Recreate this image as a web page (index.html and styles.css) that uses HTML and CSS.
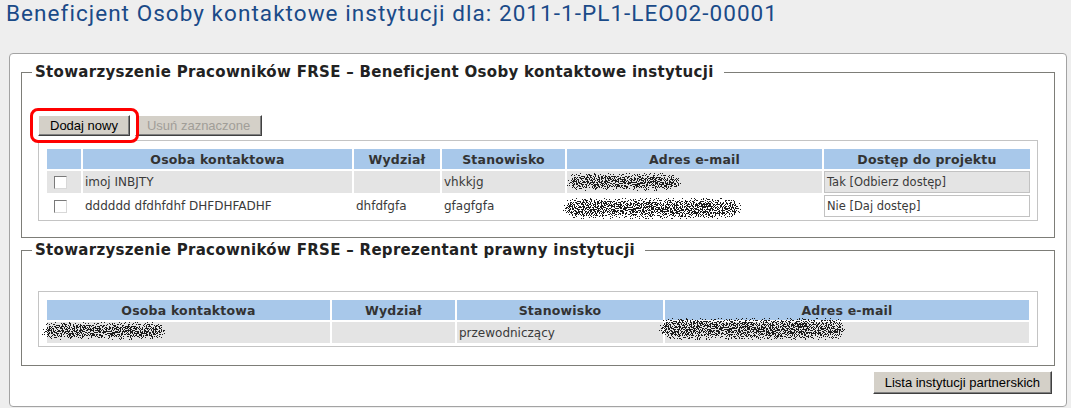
FILE: index.html
```html
<!DOCTYPE html>
<html lang="pl">
<head>
<meta charset="utf-8">
<title>Beneficjent Osoby kontaktowe</title>
<link rel="stylesheet" href="styles.css">
</head>
<body>
<svg class="defs" width="0" height="0" aria-hidden="true">
  <defs>
    <filter id="dither" x="-20%" y="-40%" width="140%" height="180%" color-interpolation-filters="sRGB">
      <feGaussianBlur in="SourceAlpha" stdDeviation="3" result="blur"/>
      <feTurbulence type="fractalNoise" baseFrequency="0.9" numOctaves="2" seed="7" result="noise"/>
      <feColorMatrix in="noise" type="matrix" values="0 0 0 0 0  0 0 0 0 0  0 0 0 0 0  2.4 0 0 0 -0.7" result="na"/>
      <feComposite in="na" in2="blur" operator="arithmetic" k1="0" k2="1" k3="1" k4="-0.97" result="mix"/>
      <feComponentTransfer in="mix" result="th"><feFuncA type="discrete" tableValues="0 1"/></feComponentTransfer>
      <feFlood flood-color="#1c1c1c"/>
      <feComposite in2="th" operator="in"/>
    </filter>
  </defs>
</svg>

<h1 class="title">Beneficjent Osoby kontaktowe instytucji dla: 2011-1-PL1-LEO02-00001</h1>

<div class="panel">
  <fieldset class="group group-contacts">
    <legend>Stowarzyszenie Pracowników FRSE – Beneficjent Osoby kontaktowe instytucji</legend>
    <div class="toolbar">
      <span class="mark-wrap"><button class="btn" type="button">Dodaj nowy</button><span class="mark"></span></span>
      <button class="btn" type="button" disabled>Usuń zaznaczone</button>
    </div>
    <div class="grid-box">
      <table class="grid grid-contacts">
        <colgroup>
          <col class="c-cb"><col class="c-name1"><col class="c-dept1"><col class="c-pos1"><col class="c-mail1"><col class="c-acc">
        </colgroup>
        <thead>
          <tr><th></th><th>Osoba kontaktowa</th><th>Wydział</th><th>Stanowisko</th><th>Adres e-mail</th><th>Dostęp do projektu</th></tr>
        </thead>
        <tbody>
          <tr class="odd">
            <td class="cb"><span class="check"></span></td>
            <td>imoj INBJTY</td>
            <td></td>
            <td>vhkkjg</td>
            <td class="mail"><svg class="smudge smudge-1" viewBox="0 0 124 24"><rect x="4" y="3" width="116" height="18" rx="9" filter="url(#dither)"/></svg></td>
            <td class="access">Tak [Odbierz dostęp]</td>
          </tr>
          <tr class="even">
            <td class="cb"><span class="check"></span></td>
            <td>dddddd dfdhfdhf DHFDHFADHF</td>
            <td>dhfdfgfa</td>
            <td>gfagfgfa</td>
            <td class="mail"><svg class="smudge smudge-2" viewBox="0 0 188 27"><rect x="4" y="3" width="180" height="21" rx="10" filter="url(#dither)"/></svg></td>
            <td class="access">Nie [Daj dostęp]</td>
          </tr>
        </tbody>
      </table>
    </div>
  </fieldset>

  <fieldset class="group group-legal">
    <legend>Stowarzyszenie Pracowników FRSE – Reprezentant prawny instytucji</legend>
    <div class="grid-box">
      <table class="grid grid-legal">
        <colgroup>
          <col class="c-name2"><col class="c-dept2"><col class="c-pos2"><col class="c-mail2">
        </colgroup>
        <thead>
          <tr><th>Osoba kontaktowa</th><th>Wydział</th><th>Stanowisko</th><th>Adres e-mail</th></tr>
        </thead>
        <tbody>
          <tr class="odd">
            <td class="mail"><svg class="smudge smudge-3" viewBox="0 0 133 24"><rect x="4" y="3" width="125" height="18" rx="9" filter="url(#dither)"/></svg></td>
            <td></td>
            <td>przewodniczący</td>
            <td class="mail"><svg class="smudge smudge-4" viewBox="0 0 196 28"><rect x="4" y="3" width="188" height="22" rx="10" filter="url(#dither)"/></svg></td>
          </tr>
        </tbody>
      </table>
    </div>
  </fieldset>

  <div class="actions">
    <button class="btn" type="button">Lista instytucji partnerskich</button>
  </div>
</div>
</body>
</html>
```

FILE: styles.css
```css
body {
  margin: 0;
  background: #eeeeee;
  font-family: "DejaVu Sans", Verdana, sans-serif;
  color: #333;
}

.defs {
  position: absolute;
  width: 0;
  height: 0;
  overflow: hidden;
}

.title {
  margin: 0;
  padding-left: 6px;
  font-family: Roboto, "Open Sans", sans-serif;
  font-weight: 400;
  font-size: 22.5px;
  line-height: 27px;
  letter-spacing: 1.05px;
  color: #1a4a88;
  white-space: nowrap;
}

.panel {
  margin: 26px 4px 0 9px;
  padding: 9px 11px 12px;
  background: #fff;
  border: 1px solid #a3a3a3;
  border-radius: 4px;
}

.group {
  margin: 0;
  border: 1px solid #7d7d78;
  min-width: 0;
}

.group legend {
  margin-left: -6px;
  padding: 0 10px 0 3px;
  font-family: "DejaVu Sans", Verdana, sans-serif;
  font-weight: bold;
  font-size: 15px;
  line-height: 18px;
  letter-spacing: 0.3px;
  color: #222;
  white-space: nowrap;
}

.group-contacts {
  padding: 34px 16px 16px;
}

.group-legal {
  margin-top: 3px;
  padding: 32px 16px 18px;
}

.toolbar {
  display: flex;
  gap: 5px;
  margin-bottom: 4px;
}

.mark-wrap {
  position: relative;
  display: inline-flex;
}

.mark {
  position: absolute;
  left: -8px;
  top: -7px;
  width: 103px;
  height: 29px;
  border: 3px solid #f00;
  border-radius: 8px;
  pointer-events: none;
}

.btn {
  box-sizing: border-box;
  height: 21px;
  margin: 0;
  padding: 0 11px;
  background: #d4d0c8;
  border: 1px solid;
  border-color: #fff #404040 #404040 #fff;
  box-shadow: inset -1px -1px 0 #808080;
  border-radius: 0;
  font-family: "Liberation Sans", Arial, sans-serif;
  font-size: 13px;
  line-height: 17px;
  color: #000;
}

.btn:disabled {
  color: #a19e98;
}

.grid-box {
  border: 1px solid #c4c4c4;
  padding: 6px 5px 1px 6px;
}

.grid {
  table-layout: fixed;
  border-collapse: separate;
  border-spacing: 2px;
  font-size: 12px;
  color: #3a3a3a;
}

.grid-contacts { width: 987px; }
.grid-legal { width: 986px; }

.c-cb { width: 34px; }
.c-name1 { width: 269px; }
.c-dept1 { width: 86px; }
.c-pos1 { width: 123px; }
.c-mail1 { width: 255px; }
.c-acc { width: 206px; }

.c-name2 { width: 283px; }
.c-dept2 { width: 123px; }
.c-pos2 { width: 206px; }
.c-mail2 { width: 364px; }

.grid thead tr { height: 20px; }
.grid-contacts tbody tr { height: 22px; }
.grid-legal tbody tr { height: 21px; }

.grid th {
  padding: 0 2px;
  background: #a8c8ea;
  font-weight: bold;
  font-size: 12.5px;
  letter-spacing: 0.2px;
  color: #333;
  text-align: center;
  white-space: nowrap;
}

.grid td {
  padding: 0 2px;
  white-space: nowrap;
  vertical-align: middle;
}

.grid tr.odd td { background: #e4e4e4; }
.grid tr.even td { background: #fff; }

.grid td.cb {
  padding-left: 7px;
}

.check {
  display: block;
  width: 11px;
  height: 11px;
  background: #fff;
  border: 1px solid;
  border-color: #7a7a7a #d8d8d8 #d8d8d8 #7a7a7a;
}

.grid td.access {
  border: 1px solid #c2c2c2;
  padding-left: 2px;
  font-size: 11.5px;
}

.grid td.mail {
  position: relative;
}

.smudge {
  position: absolute;
  display: block;
}

.smudge-1 { left: -5px; top: -1px; width: 124px; height: 24px; }
.smudge-2 { left: -9px; top: 0; width: 188px; height: 27px; }
.smudge-3 { left: -10px; top: -3px; width: 133px; height: 24px; }
.smudge-4 { left: -11px; top: -7px; width: 196px; height: 28px; }

.actions {
  display: flex;
  justify-content: flex-end;
  padding-right: 3px;
  margin-top: 5px;
}

.actions .btn {
  height: 23px;
}
```
